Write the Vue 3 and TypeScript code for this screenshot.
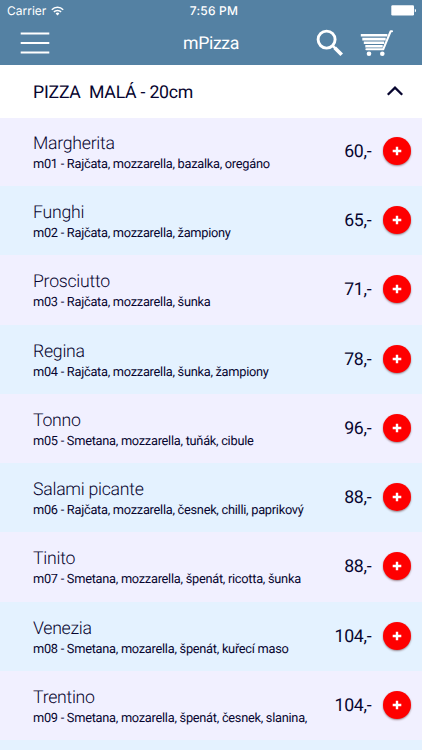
<script setup lang="ts">
interface Pizza {
  name: string
  description: string
  price: number
}

const pizzas: Pizza[] = [
  { name: 'Margherita', description: 'm01 - Rajčata, mozzarella, bazalka, oregáno', price: 60 },
  { name: 'Funghi', description: 'm02 - Rajčata, mozzarella, žampiony', price: 65 },
  { name: 'Prosciutto', description: 'm03 - Rajčata, mozzarella, šunka', price: 71 },
  { name: 'Regina', description: 'm04 - Rajčata, mozzarella, šunka, žampiony', price: 78 },
  { name: 'Tonno', description: 'm05 - Smetana, mozzarella, tuňák, cibule', price: 96 },
  { name: 'Salami picante', description: 'm06 - Rajčata, mozzarella, česnek, chilli, paprikový', price: 88 },
  { name: 'Tinito', description: 'm07 - Smetana, mozzarella, špenát, ricotta, šunka', price: 88 },
  { name: 'Venezia', description: 'm08 - Smetana, mozarella, špenát, kuřecí maso', price: 104 },
  { name: 'Trentino', description: 'm09 - Smetana, mozarella, špenát, česnek, slanina,', price: 104 },
]
</script>

<template>
  <div class="screen">
    <header class="top">
      <div class="status">
        <div class="carrier">
          <span>Carrier</span>
          <svg class="wifi" width="13" height="10" viewBox="0 0 13 10" fill="none" stroke="#fff">
            <path d="M.8 3.7a8.1 8.1 0 0 1 11.4 0M2.9 5.9a5.1 5.1 0 0 1 7.2 0" stroke-width="1.5" />
            <path d="M6.5 9.4 4.6 7.5a2.7 2.7 0 0 1 3.8 0z" fill="#fff" stroke="none" />
          </svg>
        </div>
        <span class="clock">7:56 PM</span>
        <svg class="battery" width="26" height="11" viewBox="0 0 26 11" fill="#fff">
          <rect x=".3" y=".3" width="22.7" height="10.2" rx="1.2" />
          <path d="M23.8 3.7c1.6.3 1.6 3.3 0 3.6z" />
        </svg>
      </div>
      <nav class="bar">
        <svg class="menu" width="30" height="24" viewBox="0 0 30 24" stroke="#fff" stroke-width="2">
          <path d="M.7 2.5h28.6M.7 12h28.6M.7 21.5h28.6" />
        </svg>
        <h1>mPizza</h1>
        <svg class="search" width="28" height="28" viewBox="0 0 28 28" fill="none" stroke="#fff">
          <circle cx="10.6" cy="10.6" r="8.5" stroke-width="2.9" />
          <path d="m16.8 16.8 2.6 2.6" stroke-width="2.4" />
          <path d="m18.7 18.7 7 7" stroke-width="3.7" />
        </svg>
        <svg class="cart" width="34" height="28" viewBox="0 0 34 28" fill="none" stroke="#fff">
          <path d="M32 2.2h-1.3L23.2 20.3H6.4" stroke-width="2.1" stroke-linecap="round" stroke-linejoin="round" />
          <path d="M.8 6.3h26.6M2.3 10.1h23.4M3.8 13.8h20.4M5.3 17.2h17.4" stroke-width="2.6" />
          <circle cx="9" cy="24.7" r="2.3" fill="#fff" stroke="none" />
          <circle cx="22.3" cy="24.7" r="2.3" fill="#fff" stroke="none" />
        </svg>
      </nav>
    </header>

    <section class="category">
      <h2>PIZZA&nbsp; MALÁ - 20cm</h2>
      <svg width="18" height="12" viewBox="0 0 18 12" fill="none" stroke="#07052f" stroke-width="2.3">
        <path d="m1.8 9.8 7.2-7.2 7.2 7.2" />
      </svg>
    </section>

    <ul class="list">
      <li v-for="pizza in pizzas" :key="pizza.name" class="row">
        <div class="info">
          <div class="name">{{ pizza.name }}</div>
          <div class="description">{{ pizza.description }}</div>
        </div>
        <span class="price">{{ pizza.price }},-</span>
        <button class="add" type="button">
          <svg width="10" height="10" viewBox="0 0 10 10" stroke="#fff" stroke-width="2.4">
            <path d="M.7 5h8.6M5 .7v8.6" />
          </svg>
        </button>
      </li>
      <li class="row"></li>
    </ul>
  </div>
</template>

<style>
body {
  overflow: hidden;
}
</style>

<style scoped>
.screen {
  width: 422px;
  height: 750px;
  overflow: hidden;
  display: flex;
  flex-direction: column;
  background: #fff;
  color: #07052f;
  font-family: Roboto, sans-serif;
  text-rendering: geometricPrecision;
}
.top {
  flex: none;
  height: 65.4px;
  background: #5481a3;
  color: #fff;
}
.status {
  display: grid;
  grid-template-columns: 1fr auto 1fr;
  align-items: center;
  height: 22px;
  padding: 0 5px 0 7px;
  font: 12px/22px Inter, sans-serif;
}
.carrier {
  display: flex;
  align-items: center;
  gap: 5px;
}
.wifi {
  margin-top: -1px;
}
.clock {
  padding-left: 4px;
  font-size: 12px;
  font-weight: 500;
  letter-spacing: 0.2px;
}
.battery {
  justify-self: end;
  margin-top: -1px;
}
.bar {
  display: grid;
  grid-template-columns: 30px 1fr 28px 34px;
  align-items: center;
  height: 43px;
  margin-top: -1px;
  padding: 0 28px 0 20px;
}
h1 {
  margin: 0;
  padding: 2px 0 0 40px;
  text-align: center;
  font-size: 17.7px;
  line-height: 42px;
  font-weight: 400;
  letter-spacing: -0.35px;
}
.search {
  margin-left: -16px;
}
.category {
  flex: none;
  display: flex;
  align-items: center;
  justify-content: space-between;
  height: 52.3px;
  padding: 0 18px 0 33px;
}
.category svg {
  margin-top: -1px;
}
h2 {
  margin: 0;
  padding-top: 2px;
  font-size: 17.7px;
  line-height: 24px;
  font-weight: 400;
  letter-spacing: -0.23px;
}
.list {
  margin: 0;
  padding: 0;
  list-style: none;
}
.row {
  box-sizing: border-box;
  display: flex;
  height: 69.25px;
  padding: 0 11px 0 33px;
  background: #e4f2ff;
}
.row:nth-child(odd) {
  background: #f1f0ff;
}
.row:first-child {
  height: 68.4px;
}
.row:last-child {
  background: #e4f2ff;
}
.info {
  flex: 1;
  padding-top: 16px;
}
.row:first-child .info {
  padding-top: 15px;
}
.name {
  font-size: 17.7px;
  line-height: 22px;
  font-weight: 300;
  letter-spacing: -0.27px;
}
.description {
  font-size: 12.8px;
  line-height: 20px;
  letter-spacing: -0.27px;
  white-space: nowrap;
}
.price {
  padding: 23px 11.6px 0 0;
  font-size: 17.7px;
  line-height: 24px;
  letter-spacing: -0.25px;
}
.add {
  display: flex;
  align-items: center;
  justify-content: center;
  width: 28px;
  height: 28px;
  margin-top: 20px;
  padding: 0;
  border: 0;
  border-radius: 50%;
  background: #fe0000;
  box-shadow: 0 1px 2px rgb(60 0 0 / 45%);
}
.row:first-child .price {
  padding-top: 22px;
}
.row:first-child .add {
  margin-top: 19px;
}
</style>
